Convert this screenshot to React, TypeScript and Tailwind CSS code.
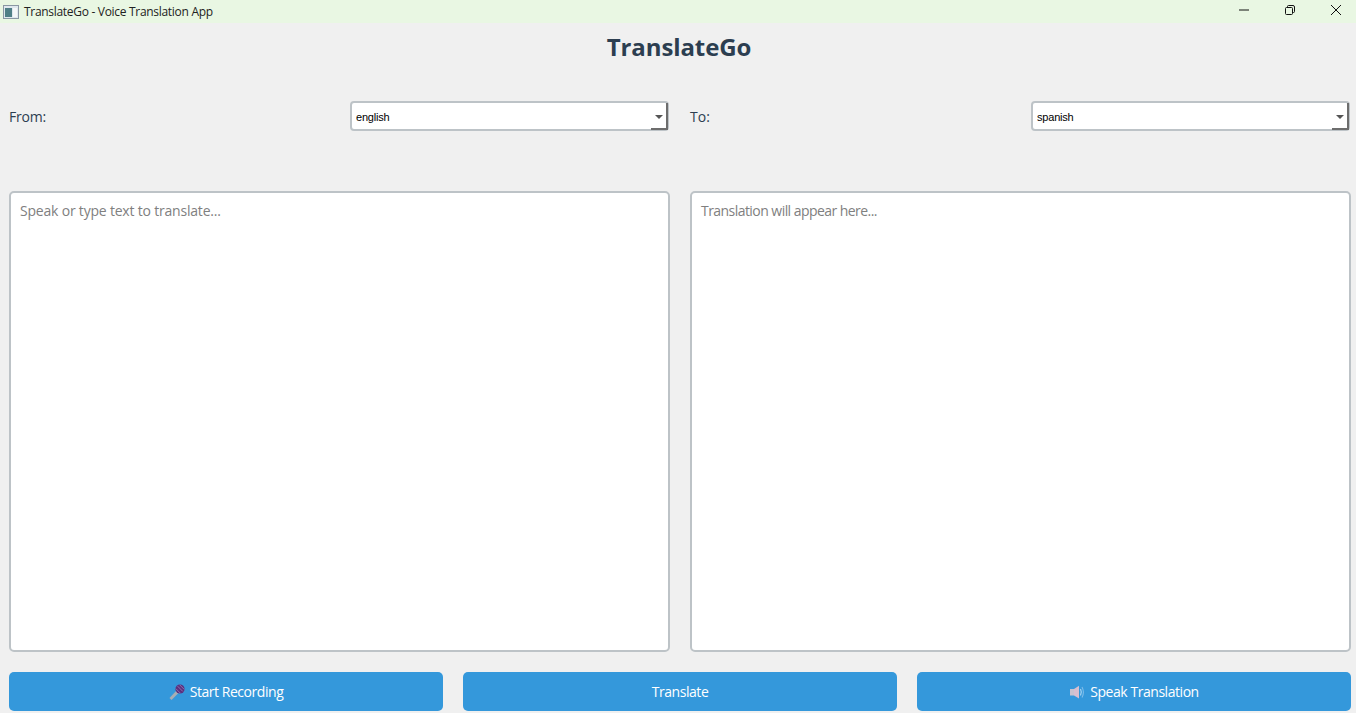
import React from "react";

function MicIcon() {
  return (
    <svg width="16" height="16" viewBox="0 0 16 16" className="shrink-0">
      <path d="M0.5 14 L8 6 L10 8.5 L2.5 16 Z" fill="#a9adb3" />
      <circle cx="11" cy="5" r="4.6" fill="#5b2f7f" />
      <path d="M8.6 2.2 L13.8 7.4 M10.6 0.8 L15.2 5.4 M6.8 4.6 L11.4 9.2" stroke="#9d84b6" strokeWidth="0.8" />
    </svg>
  );
}

function SpeakerIcon() {
  return (
    <svg width="16" height="16" viewBox="0 0 16 16" className="shrink-0">
      <rect x="1" y="5" width="4" height="6.5" fill="#c9c3d0" />
      <path d="M5 5 L10 1.8 L10 14.5 L5 11.5 Z" fill="#d8bfd0" />
      <path d="M11.5 5 Q13.2 8.2 11.5 11.5" stroke="#a8d4f2" strokeWidth="1.2" fill="none" />
      <path d="M13 3 Q15.8 8.2 13 13.5" stroke="#7fbdea" strokeWidth="1.1" fill="none" />
    </svg>
  );
}

function LangSelect({ value }: { value: string }) {
  return (
    <div className="relative w-[319px] h-[30px] shrink-0">
      <select
        defaultValue={value}
        className="w-full h-full appearance-none bg-white border-2 border-[#bdc3c7] rounded-[4px] pl-[4px] pt-[2px] text-[11px] text-black outline-none font-['Liberation_Sans',sans-serif] tracking-[-0.2px]"
      >
        <option value={value}>{value}</option>
      </select>
      <div className="absolute right-[1px] bottom-[1px] w-[17px] h-[27px] border-r-2 border-[#6d6d6d] pointer-events-none flex items-center justify-center">
        <div className="w-0 h-0 border-x-[4px] border-x-transparent border-t-[4px] border-t-[#555]" />
      </div>
      <div className="absolute right-[1px] bottom-[1px] w-[17px] h-[2px] bg-[#6d6d6d] pointer-events-none" />
    </div>
  );
}

function TextPane({ hint, tracking }: { hint: string; tracking: string }) {
  return (
    <textarea
      readOnly
      placeholder={hint}
      className={`flex-1 h-full resize-none bg-white border-2 border-[#bdc3c7] rounded-[5px] px-[9px] py-[8px] text-[14px] leading-[20px] outline-none placeholder:text-[#808080] font-['Open_Sans',sans-serif] ${tracking}`}
    />
  );
}

function ActionButton({ icon, label }: { icon?: React.ReactNode; label: string }) {
  return (
    <button className="flex-1 h-[39px] flex items-center justify-center gap-[5px] bg-[#3498db] rounded-[5px] text-white text-[14px] tracking-[-0.45px]">
      {icon}
      {label}
    </button>
  );
}

export default function App() {
  return (
    <div className="w-[1356px] h-[713px] overflow-hidden flex flex-col bg-[#f0f0f0] font-['Open_Sans',sans-serif]">
      <div className="h-[23px] shrink-0 flex items-center justify-between bg-[#e9f7e3] pl-[3px]">
        <div className="flex items-center gap-[5px]">
          <svg width="16" height="14" viewBox="0 0 16 14">
            <rect x="0.5" y="0.5" width="15" height="13" fill="#dfe8ee" stroke="#8a97a3" />
            <rect x="2" y="3" width="7" height="9" fill="#4f7f86" />
            <rect x="10" y="3" width="4" height="9" fill="#f4f7f8" />
          </svg>
          <span className="text-[12px] text-[#222] tracking-[-0.3px]">TranslateGo - Voice Translation App</span>
        </div>
        <div className="flex items-center h-full">
          <div className="w-[46px] h-full pl-[5px] pb-[3px] flex items-center justify-center">
            <svg width="12" height="12" viewBox="0 0 12 12"><path d="M1 6 H11" stroke="#111" strokeWidth="1" /></svg>
          </div>
          <div className="w-[46px] h-full pl-[5px] pb-[3px] flex items-center justify-center">
            <svg width="12" height="12" viewBox="0 0 12 12" fill="none" stroke="#111" strokeWidth="1">
              <rect x="1.5" y="3.5" width="7" height="7" rx="1" />
              <path d="M3.5 3.5 V2.5 a1 1 0 0 1 1 -1 h4.5 a1.5 1.5 0 0 1 1.5 1.5 v4.5 a1 1 0 0 1 -1 1 h-1" />
            </svg>
          </div>
          <div className="w-[46px] h-full pl-[5px] pb-[3px] flex items-center justify-center">
            <svg width="12" height="12" viewBox="0 0 12 12"><path d="M1 1 L11 11 M11 1 L1 11" stroke="#111" strokeWidth="1" /></svg>
          </div>
        </div>
      </div>

      <div className="flex-1 flex flex-col pl-[9px] pr-[5px] pb-[2px]">
        <h1 className="h-[48px] shrink-0 pr-[2px] flex items-center justify-center text-[24px] font-bold text-[#2c3e50] tracking-[-0.1px]">
          TranslateGo
        </h1>

        <div className="mt-[30px] h-[30px] shrink-0 flex gap-[21px]">
          <div className="w-[660px] flex items-center justify-between">
            <span className="text-[14px] text-[#2c3e50] tracking-[-0.2px]">From:</span>
            <LangSelect value="english" />
          </div>
          <div className="w-[660px] flex items-center justify-between">
            <span className="text-[14px] text-[#2c3e50] tracking-[0px]">To:</span>
            <LangSelect value="spanish" />
          </div>
        </div>

        <div className="mt-[60px] flex-1 min-h-0 flex gap-[20px]">
          <TextPane hint="Speak or type text to translate..." tracking="tracking-[-0.2px]" />
          <TextPane hint="Translation will appear here..." tracking="tracking-[-0.55px]" />
        </div>

        <div className="mt-[20px] shrink-0 flex gap-[20px]">
          <ActionButton icon={<MicIcon />} label="Start Recording" />
          <ActionButton label="Translate" />
          <ActionButton icon={<SpeakerIcon />} label="Speak Translation" />
        </div>
      </div>
    </div>
  );
}
